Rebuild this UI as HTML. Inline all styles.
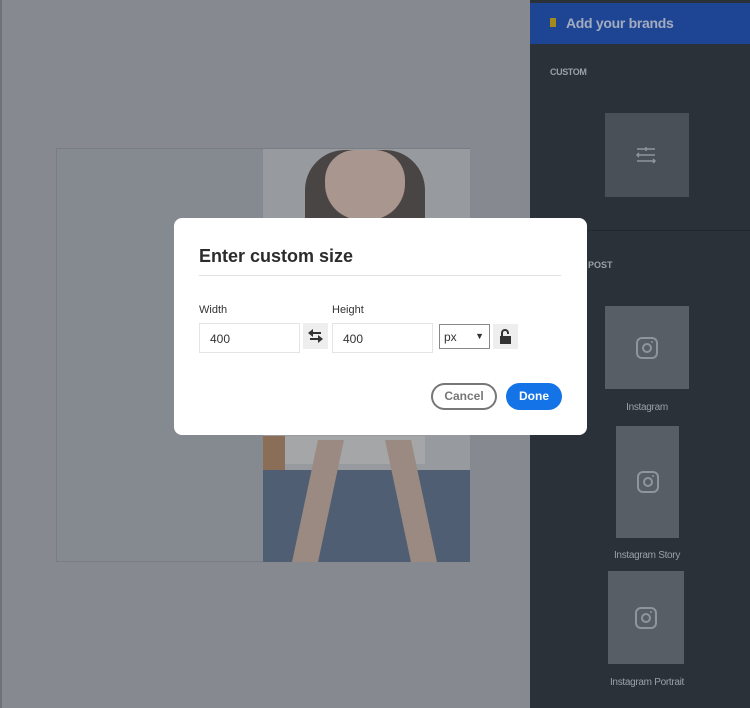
<!DOCTYPE html>
<html><head><style>
*{margin:0;padding:0;box-sizing:border-box}
body{width:750px;height:708px;background:#868a90;position:relative;overflow:hidden;font-family:"Liberation Sans",sans-serif}
.a{position:absolute}
.card{position:absolute;background:#575e66}
.ig{position:absolute;width:22px;height:22px;border:2px solid #8f959b;border-radius:6px;left:50%;top:50%;transform:translate(-50%,-50%)}
.ig:before{content:"";position:absolute;border:2px solid #8f959b;border-radius:50%;box-sizing:content-box;width:6px;height:6px;left:4px;top:4px}
.ig:after{content:"";position:absolute;width:2px;height:2px;background:#8f959b;right:3px;top:2px;border-radius:1px}
.lbl{position:absolute;color:#9aa0a6;font-size:10px;text-align:center;width:150px;left:572px;letter-spacing:-0.3px}
</style></head><body>
<div class="a" style="left:0;top:0;width:2px;height:708px;background:#6e7277"></div>
<!-- canvas -->
<div class="a" style="left:56px;top:148px;width:414px;height:414px;background:#858990;border:1px solid #7a7e84"></div>
<div class="a" style="left:263px;top:149px;width:207px;height:413px;background:#979a9e"></div>
<div class="a" style="left:305px;top:150px;width:120px;height:90px;background:#4a4545;border-radius:40px 40px 0 0"></div>
<div class="a" style="left:325px;top:150px;width:80px;height:70px;background:#a8968f;border-radius:30px 30px 36px 36px"></div>
<div class="a" style="left:263px;top:436px;width:22px;height:60px;background:#8a6e58"></div>
<div class="a" style="left:285px;top:436px;width:140px;height:28px;background:#a4a6a8"></div>
<div class="a" style="left:263px;top:470px;width:207px;height:92px;background:#4f5e72"></div>
<div class="a" style="left:305px;top:440px;width:26px;height:122px;background:#9a8a82;transform:skewX(-12deg)"></div>
<div class="a" style="left:398px;top:440px;width:26px;height:122px;background:#9a8a82;transform:skewX(12deg)"></div>
<!-- sidebar -->
<div class="a" style="left:530px;top:0;width:220px;height:708px;background:#2a3139"></div>
<div class="a" style="left:530px;top:3px;width:220px;height:41px;background:#1e4594"></div>
<div class="a" style="left:550px;top:18px;width:6px;height:9px;background:#a38a1c"></div>
<div class="a" style="left:566px;top:15px;color:#a3acbe;font-size:14px;font-weight:bold;letter-spacing:-0.3px">Add your brands</div>
<div class="a" style="left:550px;top:67px;color:#9aa0a6;font-size:9px;font-weight:bold;letter-spacing:-0.4px">CUSTOM</div>
<div class="card" style="left:605px;top:113px;width:84px;height:84px;background:#4a5058">
<svg class="a" style="left:30px;top:30px" width="24" height="24" viewBox="0 0 24 24" fill="none" stroke="#8f959b" stroke-width="1.5"><path d="M2 6h18M11 4v4M2 12h18M4 10l-2 2 2 2M2 18h18M18 16l2 2-2 2"/></svg>
</div>
<div class="a" style="left:530px;top:230px;width:220px;height:1px;background:#22282e"></div>
<div class="a" style="left:588px;top:260px;color:#9aa0a6;font-size:9px;font-weight:bold">POST</div>
<div class="card" style="left:605px;top:306px;width:84px;height:83px"><div class="ig"></div></div>
<div class="lbl" style="top:402px">Instagram</div>
<div class="card" style="left:616px;top:426px;width:63px;height:112px"><div class="ig"></div></div>
<div class="lbl" style="top:550px">Instagram Story</div>
<div class="card" style="left:608px;top:571px;width:76px;height:93px"><div class="ig"></div></div>
<div class="lbl" style="top:677px">Instagram Portrait</div>
<!-- dialog -->
<div class="a" style="left:174px;top:218px;width:413px;height:217px;background:#fff;border-radius:8px">
<div class="a" style="left:25px;top:28px;font-size:18px;font-weight:bold;color:#2c2c2c">Enter custom size</div>
<div class="a" style="left:25px;top:57px;width:362px;height:1px;background:#e2e2e2"></div>
<div class="a" style="left:25px;top:86px;font-size:11px;color:#333">Width</div>
<div class="a" style="left:158px;top:86px;font-size:11px;color:#333">Height</div>
<div class="a" style="left:25px;top:105px;width:101px;height:30px;border:1px solid #e4e4e4;font-size:12px;color:#333;padding:8px 0 0 10px">400</div>
<div class="a" style="left:129px;top:105px;width:25px;height:26px;background:#eee">
<svg class="a" style="left:4px;top:5px" width="17" height="16" viewBox="0 0 17 16" fill="#333"><path d="M1 5l5-4v3h8v2H6v3zM16 11l-5 4v-3H3v-2h8V7z"/></svg></div>
<div class="a" style="left:158px;top:105px;width:101px;height:30px;border:1px solid #e4e4e4;font-size:12px;color:#333;padding:8px 0 0 10px">400</div>
<div class="a" style="left:265px;top:106px;width:51px;height:25px;border:1px solid #888;font-size:12px;color:#333;padding:5px 0 0 4px">px<span style="position:absolute;right:5px;top:6px;font-size:9px">▼</span></div>
<div class="a" style="left:319px;top:106px;width:25px;height:25px;background:#eee">
<svg class="a" style="left:6px;top:4px" width="13" height="17" viewBox="0 0 13 17"><path d="M3 8V5a3 3 0 0 1 6 0v1" fill="none" stroke="#333" stroke-width="2"/><rect x="1" y="8" width="11" height="8" fill="#333"/></svg></div>
<div class="a" style="left:257px;top:165px;width:66px;height:27px;border:2px solid #777;border-radius:14px;font-size:12px;font-weight:bold;color:#777;text-align:center;line-height:23px">Cancel</div>
<div class="a" style="left:332px;top:165px;width:56px;height:27px;background:#1473e6;border-radius:14px;font-size:12px;font-weight:bold;color:#fff;text-align:center;line-height:27px">Done</div>
</div>
</body></html>
